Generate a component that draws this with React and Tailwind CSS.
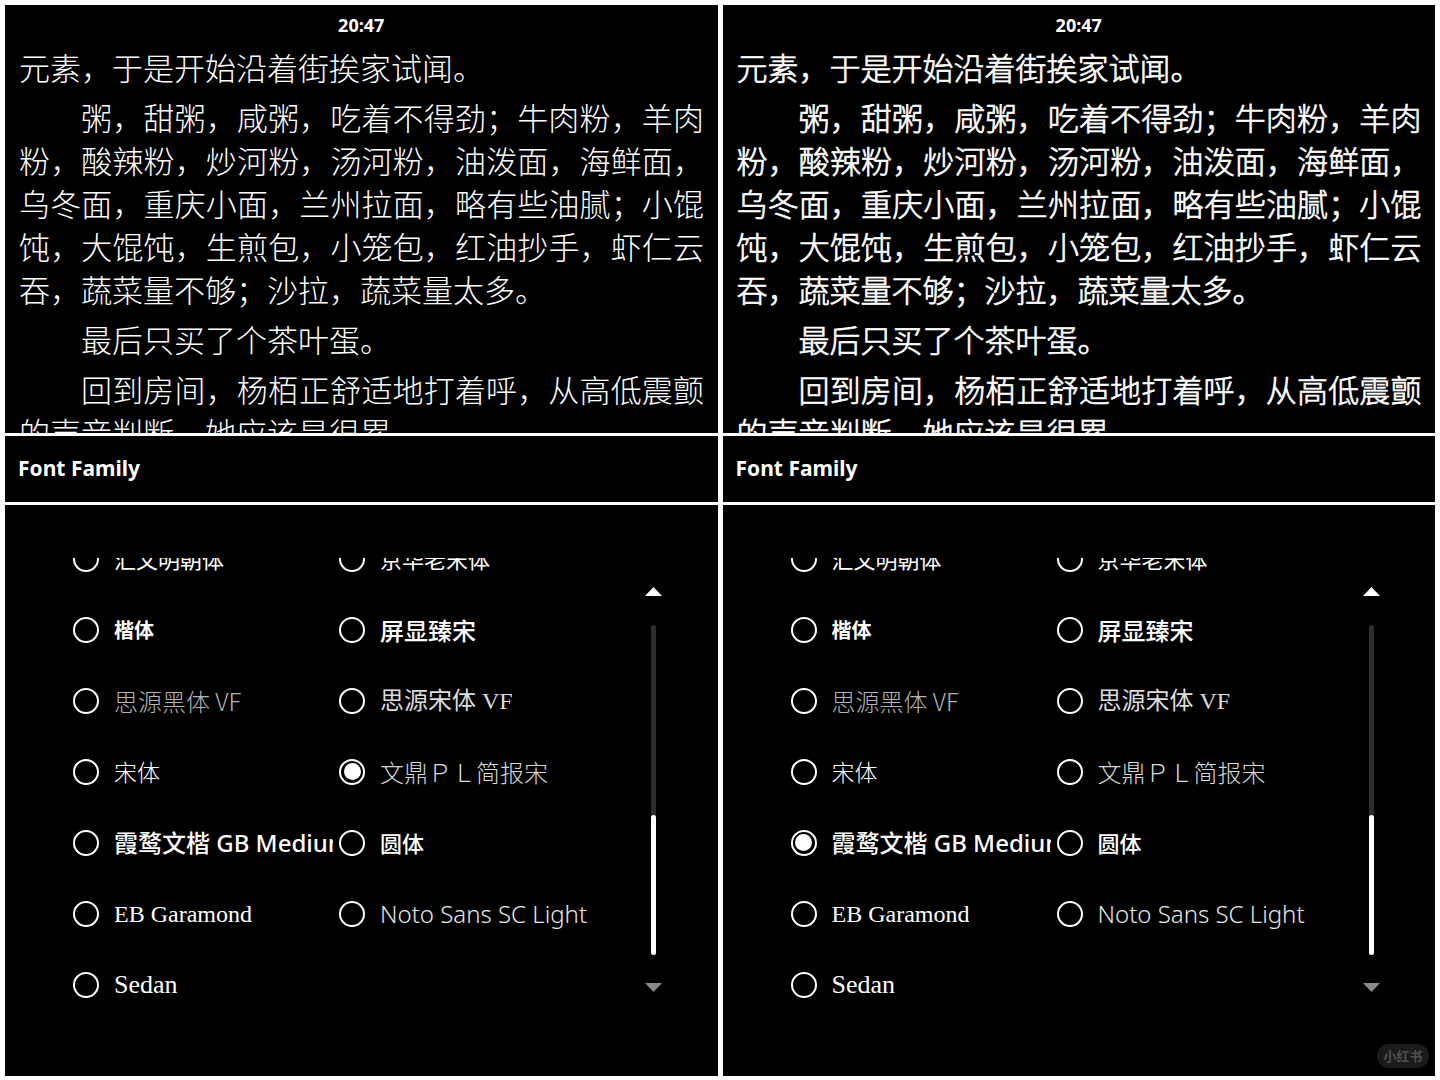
import React from "react";

const paragraphs = [
  { indent: false, lines: ["元素，于是开始沿着街挨家试闻。"] },
  {
    indent: true,
    lines: [
      "粥，甜粥，咸粥，吃着不得劲；牛肉粉，羊肉",
      "粉，酸辣粉，炒河粉，汤河粉，油泼面，海鲜面，",
      "乌冬面，重庆小面，兰州拉面，略有些油腻；小馄",
      "饨，大馄饨，生煎包，小笼包，红油抄手，虾仁云",
      "吞，蔬菜量不够；沙拉，蔬菜量太多。",
    ],
  },
  { indent: true, lines: ["最后只买了个茶叶蛋。"] },
  {
    indent: true,
    lines: ["回到房间，杨栢正舒适地打着呼，从高低震颤", "的声音判断，她应该是很累"],
  },
];

const cjk = "font-['Noto_Sans_CJK_SC',sans-serif]";

// each font option is drawn in (roughly) its own face
const fonts = [
  { name: "汇文明朝体", cls: `${cjk} text-[22px] text-white` },
  { name: "京华老宋体", cls: `${cjk} text-[22px] text-white` },
  { name: "楷体", cls: `${cjk} text-[20px] font-bold text-white` },
  { name: "屏显臻宋", cls: `${cjk} text-[24px] font-medium text-white` },
  { name: "思源黑体 VF", cls: `${cjk} text-[24px] font-light text-[#b4b4b4]` },
  { name: "思源宋体 VF", cls: `font-['Liberation_Serif','Noto_Sans_CJK_SC',serif] text-[24px] text-[#dcdcdc]` },
  { name: "宋体", cls: `${cjk} text-[23px] font-light text-white` },
  { name: "文鼎ＰＬ简报宋", cls: `${cjk} text-[24px] font-light text-[#d8d8d8]` },
  { name: "霞鹜文楷 GB Medium", cls: `font-['Noto_Sans','Noto_Sans_CJK_SC',sans-serif] text-[24px] font-medium text-white` },
  { name: "圆体", cls: `${cjk} text-[22px] font-medium text-white` },
  { name: "EB Garamond", cls: "font-['Liberation_Serif',serif] text-[24px] text-white" },
  { name: "Noto Sans SC Light", cls: "font-['Noto_Sans',sans-serif] text-[24px] font-light text-[#e6e6e6]" },
  { name: "Sedan", cls: "font-['Liberation_Serif',serif] text-[26px] text-white" },
];

function Radio({ checked }) {
  return (
    <span className="flex h-[26px] w-[26px] shrink-0 items-center justify-center rounded-full border-2 border-white">
      {checked && <span className="h-[17px] w-[17px] rounded-full bg-white" />}
    </span>
  );
}

function Reader({ bold }) {
  const face = bold ? "font-light [-webkit-text-stroke:0.7px_white]" : "font-light";
  return (
    <div className="h-[428px] overflow-hidden bg-black text-white">
      <div className="flex h-[40px] items-center justify-center font-['Open_Sans',sans-serif] text-[18px] font-bold">
        20:47
      </div>
      <div className={`pl-[14px] w-[699px] ${cjk} ${face} text-[31px] leading-[43px]`}>
        {paragraphs.map((p, i) => (
          <div key={i} className={i > 0 ? "mt-[7px]" : ""}>
            {p.lines.map((l, j) => (
              <div
                key={j}
                className={`whitespace-nowrap ${p.indent && j === 0 ? "pl-[62px]" : ""} ${
                  j < p.lines.length - 1 ? "[text-align-last:justify]" : ""
                }`}
              >
                {l}
              </div>
            ))}
          </div>
        ))}
      </div>
    </div>
  );
}

function Triangle({ up, color }) {
  return (
    <svg width="17" height="9" viewBox="0 0 17 9">
      <polygon points={up ? "8.5,0 17,9 0,9" : "0,0 17,0 8.5,9"} fill={color} />
    </svg>
  );
}

function FontList({ selected, watermark }) {
  const rows = [];
  for (let i = 0; i < fonts.length; i += 2) rows.push([fonts[i], fonts[i + 1]]);
  return (
    <div className="relative flex h-[571px] bg-black pl-[68px]">
      <div className="mt-[53px] h-[470px] w-[572px] overflow-hidden">
        <div className="-mt-[35px]">
          {rows.map((row, r) => (
            <div key={r} className="grid h-[71px] grid-cols-[266px_1fr] items-center">
              {row.map((f, c) =>
                f ? (
                  <div key={c} className="flex min-w-0 items-center pr-[6px]">
                    <Radio checked={f.name === selected} />
                    <span className={`ml-[15px] min-w-0 overflow-hidden whitespace-nowrap ${f.cls}`}>
                      {f.name}
                    </span>
                  </div>
                ) : (
                  <div key={c} />
                )
              )}
            </div>
          ))}
        </div>
      </div>
      <div className="flex w-[17px] flex-col items-center pt-[82px]">
        <Triangle up color="#ffffff" />
        <div className="mt-[29px] flex h-[330px] w-[5px] flex-col justify-end rounded-full bg-[#2e2e2e]">
          <div className="h-[140px] w-[5px] rounded-full bg-white" />
        </div>
        <div className="mt-[28px]">
          <Triangle color="#8a8a8a" />
        </div>
      </div>
      {watermark && (
        <div className="absolute bottom-[8px] right-[6px] flex h-[24px] w-[52px] items-center justify-center rounded-full bg-[#1b1b1b] font-['Noto_Sans_CJK_SC',sans-serif] text-[13px] font-bold text-[#4e4e4e]">
          小红书
        </div>
      )}
    </div>
  );
}

function Panel({ bold, selected, watermark }) {
  return (
    <div className="flex w-[713px] flex-col gap-[3px] bg-white">
      <Reader bold={bold} />
      <div className="flex h-[66px] items-center bg-black px-[13px] font-['Noto_Sans',sans-serif] text-[21px] font-bold text-white">
        Font Family
      </div>
      <FontList selected={selected} watermark={watermark} />
    </div>
  );
}

export default function App() {
  return (
    <div className="flex h-[1080px] w-[1440px] gap-[5px] bg-white px-[5px] pt-[5px]">
      <Panel bold={false} selected="文鼎ＰＬ简报宋" />
      <Panel bold selected="霞鹜文楷 GB Medium" watermark />
    </div>
  );
}
